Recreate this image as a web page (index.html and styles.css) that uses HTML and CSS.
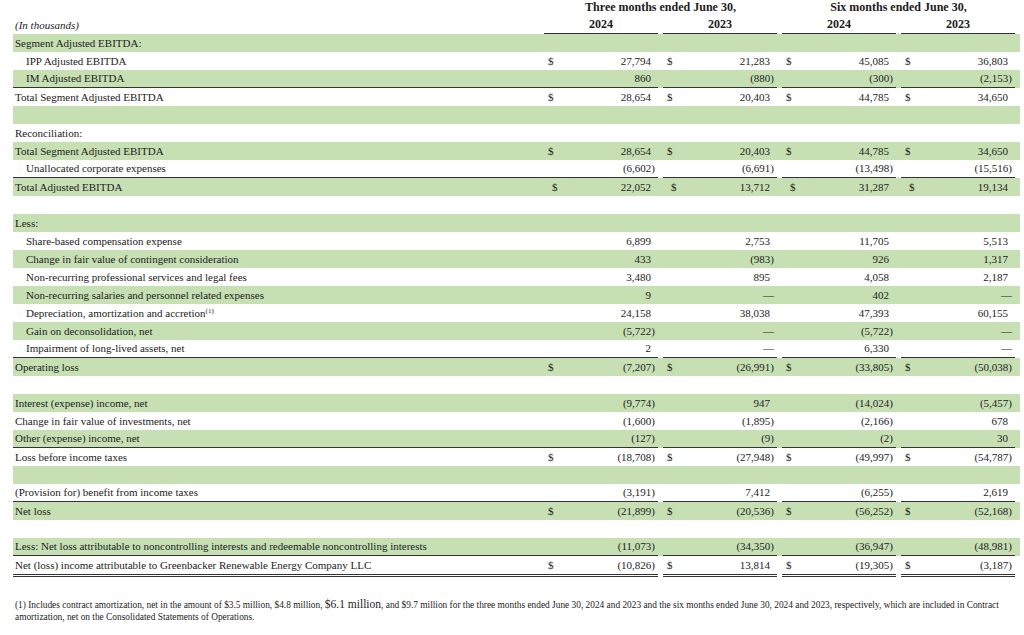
FILE: index.html
```html
<!DOCTYPE html>
<html>
<head>
<meta charset="utf-8">
<link rel="stylesheet" href="styles.css">
</head>
<body>
<div class="report">
  <div class="hrow top">
    <div class="lab"></div>
    <div class="grp">Three months ended June 30,</div>
    <div class="grp">Six months ended June 30,</div>
  </div>
  <div class="hrow years">
    <div class="lab it">(In thousands)</div>
    <div class="yr">2024</div>
    <div class="yr">2023</div>
    <div class="yr">2024</div>
    <div class="yr">2023</div>
  </div>
  <div class="body">
    <div class="row"><div class="lab">Segment Adjusted EBITDA:</div><div class="v"></div><div class="v"></div><div class="v"></div><div class="v"></div></div>
    <div class="row"><div class="lab ind">IPP Adjusted EBITDA</div><div class="v"><span class="d">$</span><span class="n">27,794</span></div><div class="v"><span class="d">$</span><span class="n">21,283</span></div><div class="v"><span class="d">$</span><span class="n">45,085</span></div><div class="v"><span class="d">$</span><span class="n">36,803</span></div></div>
    <div class="row ul"><div class="lab ind">IM Adjusted EBITDA</div><div class="v"><span class="n">860</span></div><div class="v neg"><span class="n">(880)</span></div><div class="v neg"><span class="n">(300)</span></div><div class="v neg"><span class="n">(2,153)</span></div></div>
    <div class="row"><div class="lab">Total Segment Adjusted EBITDA</div><div class="v"><span class="d">$</span><span class="n">28,654</span></div><div class="v"><span class="d">$</span><span class="n">20,403</span></div><div class="v"><span class="d">$</span><span class="n">44,785</span></div><div class="v"><span class="d">$</span><span class="n">34,650</span></div></div>
    <div class="row"><div class="lab"></div><div class="v"></div><div class="v"></div><div class="v"></div><div class="v"></div></div>
    <div class="row"><div class="lab">Reconciliation:</div><div class="v"></div><div class="v"></div><div class="v"></div><div class="v"></div></div>
    <div class="row"><div class="lab">Total Segment Adjusted EBITDA</div><div class="v"><span class="d">$</span><span class="n">28,654</span></div><div class="v"><span class="d">$</span><span class="n">20,403</span></div><div class="v"><span class="d">$</span><span class="n">44,785</span></div><div class="v"><span class="d">$</span><span class="n">34,650</span></div></div>
    <div class="row ul"><div class="lab ind">Unallocated corporate expenses</div><div class="v neg"><span class="n">(6,602)</span></div><div class="v neg"><span class="n">(6,691)</span></div><div class="v neg"><span class="n">(13,498)</span></div><div class="v neg"><span class="n">(15,516)</span></div></div>
    <div class="row shift"><div class="lab">Total Adjusted EBITDA</div><div class="v"><span class="d">$</span><span class="n">22,052</span></div><div class="v"><span class="d">$</span><span class="n">13,712</span></div><div class="v"><span class="d">$</span><span class="n">31,287</span></div><div class="v"><span class="d">$</span><span class="n">19,134</span></div></div>
    <div class="row"><div class="lab"></div><div class="v"></div><div class="v"></div><div class="v"></div><div class="v"></div></div>
    <div class="row"><div class="lab">Less:</div><div class="v"></div><div class="v"></div><div class="v"></div><div class="v"></div></div>
    <div class="row"><div class="lab ind">Share-based compensation expense</div><div class="v"><span class="n">6,899</span></div><div class="v"><span class="n">2,753</span></div><div class="v"><span class="n">11,705</span></div><div class="v"><span class="n">5,513</span></div></div>
    <div class="row"><div class="lab ind">Change in fair value of contingent consideration</div><div class="v"><span class="n">433</span></div><div class="v neg"><span class="n">(983)</span></div><div class="v"><span class="n">926</span></div><div class="v"><span class="n">1,317</span></div></div>
    <div class="row"><div class="lab ind">Non-recurring professional services and legal fees</div><div class="v"><span class="n">3,480</span></div><div class="v"><span class="n">895</span></div><div class="v"><span class="n">4,058</span></div><div class="v"><span class="n">2,187</span></div></div>
    <div class="row"><div class="lab ind">Non-recurring salaries and personnel related expenses</div><div class="v"><span class="n">9</span></div><div class="v neg"><span class="n">—</span></div><div class="v"><span class="n">402</span></div><div class="v neg"><span class="n">—</span></div></div>
    <div class="row"><div class="lab ind">Depreciation, amortization and accretion<sup>(1)</sup></div><div class="v"><span class="n">24,158</span></div><div class="v"><span class="n">38,038</span></div><div class="v"><span class="n">47,393</span></div><div class="v"><span class="n">60,155</span></div></div>
    <div class="row"><div class="lab ind">Gain on deconsolidation, net</div><div class="v neg"><span class="n">(5,722)</span></div><div class="v neg"><span class="n">—</span></div><div class="v neg"><span class="n">(5,722)</span></div><div class="v neg"><span class="n">—</span></div></div>
    <div class="row ul"><div class="lab ind">Impairment of long-lived assets, net</div><div class="v"><span class="n">2</span></div><div class="v neg"><span class="n">—</span></div><div class="v"><span class="n">6,330</span></div><div class="v neg"><span class="n">—</span></div></div>
    <div class="row"><div class="lab">Operating loss</div><div class="v neg"><span class="d">$</span><span class="n">(7,207)</span></div><div class="v neg"><span class="d">$</span><span class="n">(26,991)</span></div><div class="v neg"><span class="d">$</span><span class="n">(33,805)</span></div><div class="v neg"><span class="d">$</span><span class="n">(50,038)</span></div></div>
    <div class="row"><div class="lab"></div><div class="v"></div><div class="v"></div><div class="v"></div><div class="v"></div></div>
    <div class="row"><div class="lab">Interest (expense) income, net</div><div class="v neg"><span class="n">(9,774)</span></div><div class="v"><span class="n">947</span></div><div class="v neg"><span class="n">(14,024)</span></div><div class="v neg"><span class="n">(5,457)</span></div></div>
    <div class="row"><div class="lab">Change in fair value of investments, net</div><div class="v neg"><span class="n">(1,600)</span></div><div class="v neg"><span class="n">(1,895)</span></div><div class="v neg"><span class="n">(2,166)</span></div><div class="v"><span class="n">678</span></div></div>
    <div class="row ul"><div class="lab">Other (expense) income, net</div><div class="v neg"><span class="n">(127)</span></div><div class="v neg"><span class="n">(9)</span></div><div class="v neg"><span class="n">(2)</span></div><div class="v"><span class="n">30</span></div></div>
    <div class="row"><div class="lab">Loss before income taxes</div><div class="v neg"><span class="d">$</span><span class="n">(18,708)</span></div><div class="v neg"><span class="d">$</span><span class="n">(27,948)</span></div><div class="v neg"><span class="d">$</span><span class="n">(49,997)</span></div><div class="v neg"><span class="d">$</span><span class="n">(54,787)</span></div></div>
    <div class="row"><div class="lab"></div><div class="v"></div><div class="v"></div><div class="v"></div><div class="v"></div></div>
    <div class="row ul"><div class="lab">(Provision for) benefit from income taxes</div><div class="v neg"><span class="n">(3,191)</span></div><div class="v"><span class="n">7,412</span></div><div class="v neg"><span class="n">(6,255)</span></div><div class="v"><span class="n">2,619</span></div></div>
    <div class="row"><div class="lab">Net loss</div><div class="v neg"><span class="d">$</span><span class="n">(21,899)</span></div><div class="v neg"><span class="d">$</span><span class="n">(20,536)</span></div><div class="v neg"><span class="d">$</span><span class="n">(56,252)</span></div><div class="v neg"><span class="d">$</span><span class="n">(52,168)</span></div></div>
    <div class="row"><div class="lab"></div><div class="v"></div><div class="v"></div><div class="v"></div><div class="v"></div></div>
    <div class="row ul"><div class="lab">Less: Net loss attributable to noncontrolling interests and redeemable noncontrolling interests</div><div class="v neg"><span class="n">(11,073)</span></div><div class="v neg"><span class="n">(34,350)</span></div><div class="v neg"><span class="n">(36,947)</span></div><div class="v neg"><span class="n">(48,981)</span></div></div>
    <div class="row dbl"><div class="lab">Net (loss) income attributable to Greenbacker Renewable Energy Company LLC</div><div class="v neg"><span class="d">$</span><span class="n">(10,826)</span></div><div class="v"><span class="d">$</span><span class="n">13,814</span></div><div class="v neg"><span class="d">$</span><span class="n">(19,305)</span></div><div class="v neg"><span class="d">$</span><span class="n">(3,187)</span></div></div>
  </div>
  <p class="note">(1) Includes contract amortization, net in the amount of $3.5 million, $4.8 million, <span class="big">$6.1 million</span>, and $9.7 million for the three months ended June 30, 2024 and 2023 and the six months ended June 30, 2024 and 2023, respectively, which are included in Contract<br>amortization, net on the Consolidated Statements of Operations.</p>
</div>
</body>
</html>
```

FILE: styles.css
```css
* { box-sizing: border-box; }
html, body { margin: 0; padding: 0; background: #fff; }
body {
  font-family: "Liberation Serif", "Times New Roman", serif;
  font-size: 11px;
  color: #1c1c1c;
}
.report {
  margin-left: 13px;
  width: 1007px;
}
.hrow { display: flex; }
.hrow.top { height: 16px; line-height: 14px; font-weight: bold; font-size: 12px; }
.hrow.years { height: 18px; line-height: 18px; }
.lab { width: 531px; padding-left: 2px; white-space: nowrap; }
.lab.it { font-style: italic; }
.lab.ind { padding-left: 13px; }
.grp { width: 233px; text-align: center; }
.grp + .grp { margin-left: 5px; }
.yr {
  width: 114px;
  text-align: center;
  font-weight: bold;
  font-size: 12px;
  border-bottom: 1px solid #333;
  line-height: 17px;
}
.yr + .yr { margin-left: 5px; }

.row { display: flex; height: 18px; line-height: 18px; }
.row:nth-child(odd) { background: #c6e0b4; }
.row > div { height: 18px; }
.v {
  width: 114px;
  display: flex;
  padding-left: 4px;
  padding-right: 7px;
}
.v + .v { margin-left: 5px; }
.v.neg { padding-right: 3px; }
.v .n { margin-left: auto; }
.row.shift .v { padding-left: 8px; }
.row.shift .v:first-of-type { padding-right: 3px; }
.row.ul > div { border-bottom: 1px solid #333; line-height: 17px; }
.row.dbl { height: 21px; }
.row.dbl > div { height: 21px; border-bottom: 3px double #333; }
sup { font-size: 7px; line-height: 0; vertical-align: 4px; }

.note {
  margin: 21px 0 0 2px;
  font-size: 9.35px;
  line-height: 12px;
  white-space: nowrap;
}
.note .big { font-size: 11.5px; }
```
